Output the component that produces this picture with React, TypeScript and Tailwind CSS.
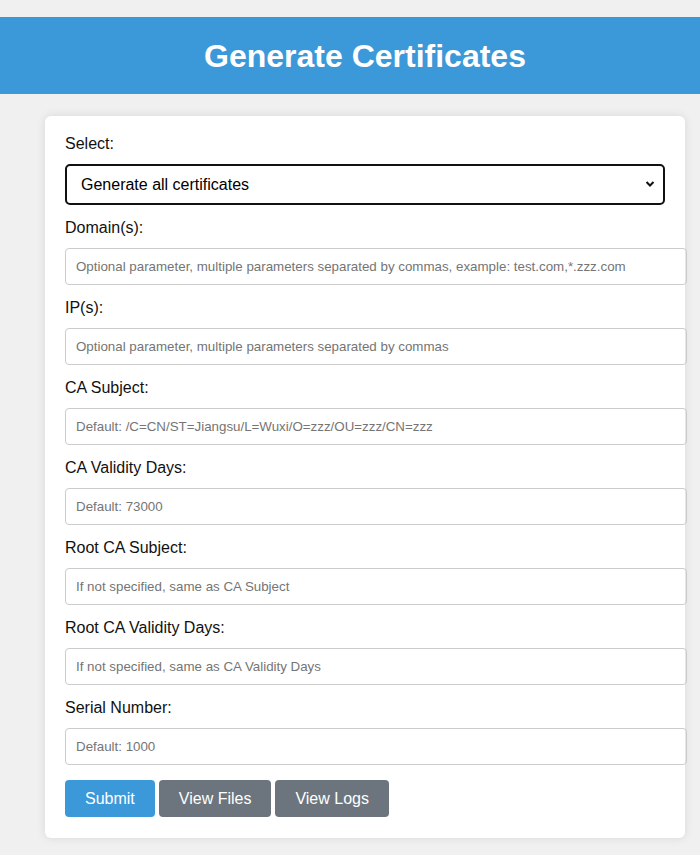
import React, { useState } from 'react';

const fields = [
  { label: 'Domain(s):', placeholder: 'Optional parameter, multiple parameters separated by commas, example: test.com,*.zzz.com' },
  { label: 'IP(s):', placeholder: 'Optional parameter, multiple parameters separated by commas' },
  { label: 'CA Subject:', placeholder: 'Default: /C=CN/ST=Jiangsu/L=Wuxi/O=zzz/OU=zzz/CN=zzz' },
  { label: 'CA Validity Days:', placeholder: 'Default: 73000' },
  { label: 'Root CA Subject:', placeholder: 'If not specified, same as CA Subject' },
  { label: 'Root CA Validity Days:', placeholder: 'If not specified, same as CA Validity Days' },
  { label: 'Serial Number:', placeholder: 'Default: 1000' },
];

const App = () => {
  const [mode, setMode] = useState('all');

  return (
    <div className="min-h-screen bg-[#f0f0f0] py-[17px] font-['Liberation_Sans',Arial,sans-serif] text-[#111]">
      {/* Header */}
      <header className="h-[77px] bg-[#3b99d9] flex items-center justify-center pl-[30px]">
        <h1 className="text-[32px] font-bold text-white leading-none">Generate Certificates</h1>
      </header>

      {/* Form card */}
      <form
        className="ml-[45px] mt-[22px] w-[640px] bg-white rounded-[6px] shadow-[0_0_10px_rgba(0,0,0,0.1)] px-5 pt-[19px] pb-[21px]"
        onSubmit={(e) => e.preventDefault()}
      >
        <label className="block text-[16px] leading-[18px] mb-[11px]">Select:</label>
        <div className="relative w-[600px] mb-[14px]">
          <select
            value={mode}
            onChange={(e) => setMode(e.target.value)}
            className="appearance-none w-full h-[41px] border-2 border-[#111] rounded-[5px] pl-[14px] text-[16px] bg-white text-black outline-none"
          >
            <option value="all">Generate all certificates</option>
            <option value="ca">Generate CA only</option>
            <option value="server">Generate server certificate</option>
          </select>
          <svg
            className="pointer-events-none absolute right-[10px] top-[16px]"
            width="10"
            height="8"
            viewBox="0 0 10 8"
          >
            <path d="M1.5 2 L5 5.5 L8.5 2" fill="none" stroke="#111" strokeWidth="2" />
          </svg>
        </div>

        {fields.map((f, i) => (
          <div key={f.label}>
            <label className="block text-[16px] leading-[18px] mb-[11px]">{f.label}</label>
            <input
              type="text"
              placeholder={f.placeholder}
              className={
                'block w-[622px] h-[37px] border border-[#ccc] rounded-[4px] px-[10px] text-[13.33px] placeholder:text-[#757575] outline-none ' +
                (i === fields.length - 1 ? 'mb-[15px]' : 'mb-[14px]')
              }
            />
          </div>
        ))}

        <div className="flex gap-1">
          <button type="submit" className="h-[37px] px-5 rounded-[4px] bg-[#3b99d9] text-white text-[16px]">
            Submit
          </button>
          <button type="button" className="h-[37px] px-5 rounded-[4px] bg-[#6c757d] text-white text-[16px]">
            View Files
          </button>
          <button type="button" className="h-[37px] px-5 rounded-[4px] bg-[#6c757d] text-white text-[16px]">
            View Logs
          </button>
        </div>
      </form>
    </div>
  );
};

export default App;
